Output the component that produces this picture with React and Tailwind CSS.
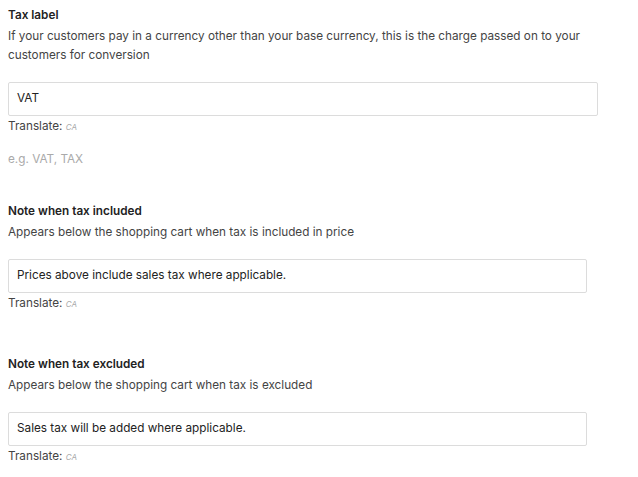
import React from "react";

const font = { fontFamily: 'Inter, "Liberation Sans", Arial, sans-serif' };

const Translate = () => (
  <div className="mt-[1px] text-[11.75px] leading-[19px] text-[#444]">
    Translate: <span className="text-[8px] italic text-[#aaa]">CA</span>
  </div>
);

const Field = ({ title, desc, value, width }) => (
  <div className="flex flex-col">
    <div className="text-[11.75px] font-semibold leading-[19px] text-[#222]">{title}</div>
    <div className="mt-[2px] text-[11.75px] leading-[19px] text-[#444]">{desc}</div>
    <div
      className={`mt-[17px] flex h-[34px] items-center rounded-[2px] border border-[#dcdcdc] bg-white px-[8px] text-[11.75px] text-[#222] ${width}`}
    >
      {value}
    </div>
    <Translate />
  </div>
);

export default function App() {
  return (
    <div className="min-h-screen bg-white px-[8px] pt-[6px]" style={font}>
      <Field
        title="Tax label"
        desc={
          <>
            If your customers pay in a currency other than your base currency, this is the charge passed on to your
            <br />
            customers for conversion
          </>
        }
        value="VAT"
        width="w-[590px]"
      />
      <div className="mt-[13px] text-[11.75px] leading-[19px] text-[#aaa]">e.g. VAT, TAX</div>

      <div className="mt-[33px]">
        <Field
          title="Note when tax included"
          desc="Appears below the shopping cart when tax is included in price"
          value="Prices above include sales tax where applicable."
          width="w-[579px]"
        />
      </div>

      <div className="mt-[41px]">
        <Field
          title="Note when tax excluded"
          desc="Appears below the shopping cart when tax is excluded"
          value="Sales tax will be added where applicable."
          width="w-[579px]"
        />
      </div>
    </div>
  );
}
